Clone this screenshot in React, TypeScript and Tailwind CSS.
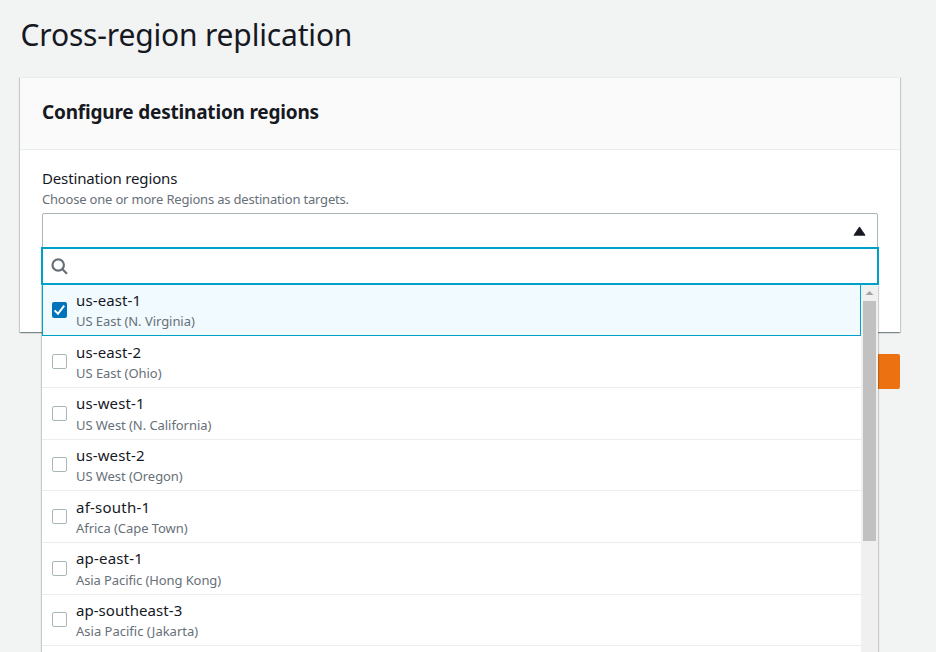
const regions = [
  { id: "us-east-1", name: "US East (N. Virginia)", idClass: "tracking-[0.12px]", nameClass: "tracking-[-0.05px]" },
  { id: "us-east-2", name: "US East (Ohio)", idClass: "tracking-[0.12px]", nameClass: "tracking-[-0.04px]" },
  { id: "us-west-1", name: "US West (N. California)", idClass: "tracking-[0.12px]", nameClass: "tracking-[-0.06px] pt-px" },
  { id: "us-west-2", name: "US West (Oregon)", idClass: "tracking-[0.12px]", nameClass: "tracking-[-0.07px]" },
  { id: "af-south-1", name: "Africa (Cape Town)", idClass: "tracking-[0.22px] pt-px", nameClass: "tracking-[-0.06px]" },
  { id: "ap-east-1", name: "Asia Pacific (Hong Kong)", idClass: "tracking-[0.18px]", nameClass: "tracking-[-0.1px] pt-px" },
  { id: "ap-southeast-3", name: "Asia Pacific (Jakarta)", idClass: "tracking-[0.05px]", nameClass: "tracking-[0px]" },
];

function Checkbox({ checked }: { checked: boolean }) {
  return checked ? (
    <span className="flex h-4 w-[15px] shrink-0 items-center justify-center rounded-[2px] bg-[#0073bb]">
      <svg width="15" height="16" viewBox="0 0 15 16" fill="none" stroke="#fff" strokeWidth="2">
        <path d="M2.6 8.4 6 11.8 12.2 3.6" />
      </svg>
    </span>
  ) : (
    <span className="mb-[0.8px] h-[15px] w-[15px] shrink-0 rounded-[2px] border border-[#aab7b8] bg-white" />
  );
}

export default function App() {
  return (
    <div className="h-[652px] w-[936px] overflow-hidden bg-[#f2f3f3] font-['Noto_Sans',sans-serif] text-[#16191f]">
      <h1 className="ml-[20.5px] pt-[14px] text-[30px] leading-[42px] tracking-[-0.17px] whitespace-nowrap">
        Cross-region replication
      </h1>
      <main className="mt-[21px] ml-5 w-[880px]">
        <section className="relative h-[255px] bg-white shadow-[0_1px_1px_0_rgba(0,28,36,0.3),1px_1px_1px_0_rgba(0,28,36,0.15),-1px_1px_1px_0_rgba(0,28,36,0.15)]">
          <header className="flex h-[73px] items-center border-t border-b border-[#eaeded] bg-[#fafafa] px-[22px]">
            <h2 className="pb-[4px] text-[19px] leading-6 font-bold tracking-[-0.2px]">Configure destination regions</h2>
          </header>
          <div className="px-[22px] pt-[17px]">
            <div className="text-[15px] leading-[22px] tracking-[-0.15px]">Destination regions</div>
            <div className="pt-px text-[13px] leading-[19px] tracking-[-0.19px] text-[#687078]">
              Choose one or more Regions as destination targets.
            </div>
            <div className="relative mt-[4px]">
              <div className="flex h-[36px] items-center justify-end rounded-t-[2px] border border-[#aab7b8] bg-white pr-[11px]">
                <svg width="13" height="10" viewBox="0 0 13 10" fill="#16191f">
                  <path d="M6.5.9 12.1 9.3H.9Z" stroke="#16191f" strokeWidth=".8" strokeLinejoin="round" />
                </svg>
              </div>
              <div className="absolute top-[34px] -right-px -left-px z-10">
                <div className="relative z-10 flex h-[38px] items-center border-2 border-[#00a1c9] bg-white pl-[8px]">
                  <svg width="17" height="17" viewBox="0 0 17 17" fill="none" stroke="#687078" strokeWidth="2.2">
                    <circle cx="7.2" cy="7" r="5.7" />
                    <path d="m11.2 11 4.8 4.8" />
                  </svg>
                </div>
                <div className="mx-px flex h-[410px] overflow-hidden bg-white shadow-[0_1px_1px_0_rgba(0,28,36,0.3),1px_1px_1px_0_rgba(0,28,36,0.15),-1px_1px_1px_0_rgba(0,28,36,0.15)]">
                  <ul className="w-[819px]">
                    {regions.map((region, index) => (
                      <li
                        key={region.id}
                        className={
                          index === 0
                            ? "flex h-[51.3px] items-center gap-[9px] border border-t-0 border-[#00a1c9] bg-[#f1faff] pl-[9px]"
                            : "flex h-[51.667px] items-center gap-[9px] border-b border-[#eaeded] pt-[0.8px] pl-[10px]"
                        }
                      >
                        <Checkbox checked={index === 0} />
                        <div className="h-[41px] whitespace-nowrap">
                          <div className={"text-[15px] leading-[21px] " + region.idClass}>{region.id}</div>
                          <div className={"text-[13px] leading-5 text-[#687078] " + region.nameClass}>{region.name}</div>
                        </div>
                      </li>
                    ))}
                  </ul>
                  <div className="flex w-[17px] flex-col items-center bg-[#f0f0f0]">
                    <svg width="17" height="16" viewBox="0 0 17 16" fill="#a3a3a3">
                      <path d="M8.5 6 12.5 10H4.5Z" />
                    </svg>
                    <div className="h-[240px] w-[13px] bg-[#c1c1c1]" />
                  </div>
                </div>
              </div>
            </div>
          </div>
        </section>
        <div className="mt-[22px] flex justify-end">
          <button className="h-[35px] w-[120px] rounded-[2px] bg-[#ec7211]" aria-label="Next" />
        </div>
      </main>
    </div>
  );
}
